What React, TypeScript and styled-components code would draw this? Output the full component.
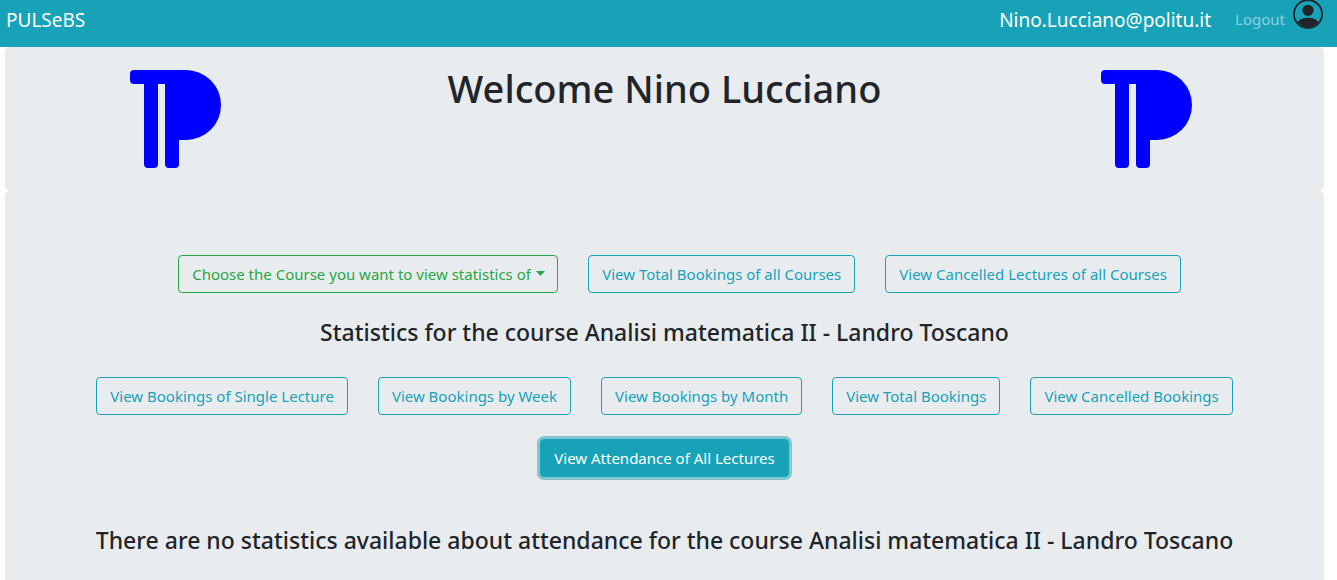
import React from "react";
import styled, { createGlobalStyle, css } from "styled-components";

const GlobalStyle = createGlobalStyle`
  *, *::before, *::after { box-sizing: border-box; }
  body {
    margin: 0;
    background: #fff;
    color: #212529;
    font-family: "Segoe UI", "Noto Sans", "Open Sans", sans-serif;
    font-size: 15px;
    line-height: 24px;
  }
`;

const Navbar = styled.nav`
  display: flex;
  align-items: flex-start;
  justify-content: space-between;
  height: 47px;
  padding: 0 14px 0 6px;
  background: #17a2b8;
`;

const Brand = styled.a`
  padding-top: 5px;
  color: #fff;
  font-size: 19px;
  line-height: 30px;
  text-decoration: none;
`;

const Account = styled.div`
  display: flex;
  align-items: flex-start;
`;

const LogoutLink = styled.a`
  padding: 7px 8px 0 24px;
  color: rgba(255, 255, 255, 0.5);
  text-decoration: none;
`;

const Avatar = styled.svg`
  display: block;
  width: 30px;
  height: 30px;
  margin-top: -1px;
  fill: #212529;
`;

const Page = styled.main`
  padding: 0 13px 0 5px;
`;

const Panel = styled.section`
  border-radius: 5px;
  background: #e9ecef;
`;

const Hero = styled(Panel)`
  display: grid;
  grid-template-columns: 5fr 9fr 5fr;
  justify-items: center;
  align-items: start;
  min-height: 144px;
  padding-top: 17px;
`;

const Title = styled.h1`
  margin: 0;
  font-size: 38px;
  font-weight: 500;
  line-height: 48px;
  white-space: nowrap;
`;

const Logo = styled.svg`
  display: block;
  width: 98px;
  height: 98px;
  margin-top: 6px;
  fill: #00f;
`;

const Statistics = styled(Panel)`
  min-height: 400px;
  padding-top: 64px;
  text-align: center;
`;

const ButtonRow = styled.div<{ $indent?: boolean }>`
  display: flex;
  flex-wrap: wrap;
  justify-content: center;
  gap: 24px 30px;
  padding-left: ${(p) => (p.$indent ? "30px" : "0")};
`;

const Heading = styled.h2`
  margin: 23px 0 29px;
  font-size: 23px;
  font-weight: 500;
  line-height: 32px;
`;

const Message = styled(Heading)`
  margin: 47px 0 24px;
`;

const control = css`
  height: 38px;
  border: 1px solid currentColor;
  border-radius: 4px;
  background: transparent;
  font: inherit;
  line-height: 24px;
  cursor: pointer;
`;

const Button = styled.button<{ $active?: boolean }>`
  ${control}
  padding: 6px 13px;
  color: #17a2b8;
  ${(p) =>
    p.$active &&
    css`
      border-color: #17a2b8;
      background: #17a2b8;
      color: #fff;
      box-shadow: 0 0 0 3px rgba(23, 162, 184, 0.5);
    `}
`;

const CoursePicker = styled.div`
  position: relative;
  color: #28a745;
`;

const CourseSelect = styled.select`
  ${control}
  appearance: none;
  padding: 6px 26px 6px 13px;
  color: inherit;
`;

const Caret = styled.svg`
  position: absolute;
  top: 16px;
  right: 13px;
  width: 9px;
  height: 5px;
  fill: currentColor;
  pointer-events: none;
`;

const PulseLogo = () => (
  <Logo viewBox="0 0 98 98" aria-hidden="true">
    <path d="M4 0H56A35 35 0 0 1 56 70H49V94A4 4 0 0 1 45 98H39A4 4 0 0 1 35 94V14H28V94A4 4 0 0 1 24 98H18A4 4 0 0 1 14 94V14H4A4 4 0 0 1 0 10V4A4 4 0 0 1 4 0Z" />
  </Logo>
);

const PersonCircle = () => (
  <Avatar viewBox="0 0 16 16" aria-hidden="true">
    <path d="M13.468 12.37C12.758 11.226 11.195 10 8 10s-4.757 1.225-5.468 2.37A6.987 6.987 0 0 0 8 15a6.987 6.987 0 0 0 5.468-2.63z" />
    <path d="M8 9a3 3 0 1 0 0-6 3 3 0 0 0 0 6z" />
    <path
      fillRule="evenodd"
      d="M8 1a7 7 0 1 0 0 14A7 7 0 0 0 8 1zM0 8a8 8 0 1 1 16 0A8 8 0 0 1 0 8z"
    />
  </Avatar>
);

const course = "Analisi matematica II - Landro Toscano";

const courseViews = [
  "View Bookings of Single Lecture",
  "View Bookings by Week",
  "View Bookings by Month",
  "View Total Bookings",
  "View Cancelled Bookings",
  "View Attendance of All Lectures",
];

export default function App() {
  const [active, setActive] = React.useState(courseViews[5]);

  return (
    <>
      <GlobalStyle />
      <Navbar>
        <Brand href="#">PULSeBS</Brand>
        <Account>
          <Brand href="#account">Nino.Lucciano@politu.it</Brand>
          <LogoutLink href="#logout">Logout</LogoutLink>
          <PersonCircle />
        </Account>
      </Navbar>
      <Page>
        <Hero>
          <PulseLogo />
          <Title>Welcome Nino Lucciano</Title>
          <PulseLogo />
        </Hero>
        <Statistics>
          <ButtonRow $indent>
            <CoursePicker>
              <CourseSelect aria-label="Choose the Course you want to view statistics of">
                <option>Choose the Course you want to view statistics of</option>
              </CourseSelect>
              <Caret viewBox="0 0 9 5" aria-hidden="true">
                <path d="M0 0H9L4.5 5Z" />
              </Caret>
            </CoursePicker>
            <Button type="button">View Total Bookings of all Courses</Button>
            <Button type="button">View Cancelled Lectures of all Courses</Button>
          </ButtonRow>
          <Heading>Statistics for the course {course}</Heading>
          <ButtonRow>
            {courseViews.map((view) => (
              <Button
                key={view}
                type="button"
                $active={view === active}
                aria-pressed={view === active}
                onClick={() => setActive(view)}
              >
                {view}
              </Button>
            ))}
          </ButtonRow>
          <Message>
            There are no statistics available about attendance for the course {course}
          </Message>
        </Statistics>
      </Page>
    </>
  );
}
